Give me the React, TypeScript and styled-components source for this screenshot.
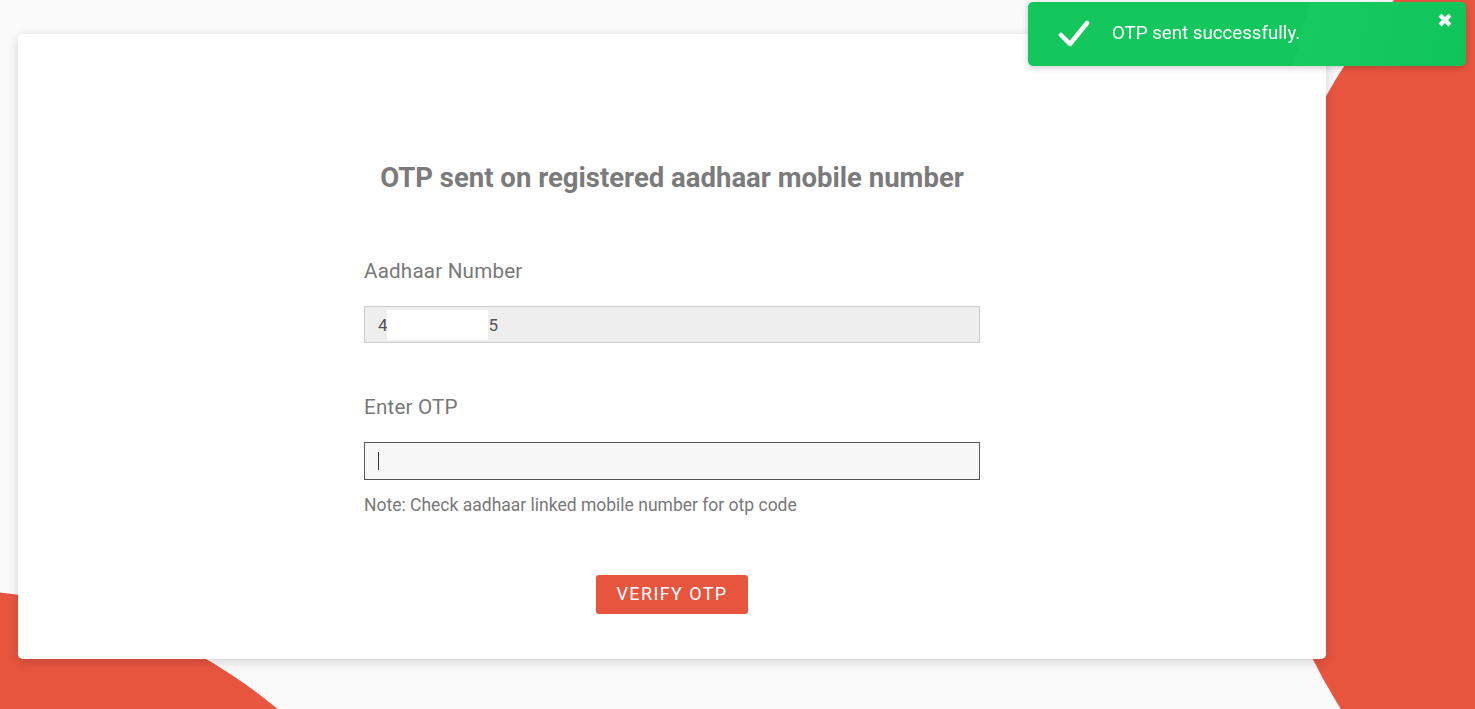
import React from 'react';
import styled, { createGlobalStyle } from 'styled-components';

const GlobalStyle = createGlobalStyle`
  html, body {
    margin: 0;
    padding: 0;
    background: #fafafa;
    font-family: Roboto, 'Liberation Sans', Arial, sans-serif;
  }
`;

const Page = styled.div`
  position: relative;
  width: 100%;
  height: 709px;
  overflow: hidden;
  background: #fafafa;
`;

const Backdrop = styled.svg`
  position: absolute;
  inset: 0;
  width: 100%;
  height: 100%;
  z-index: 0;
`;

const Card = styled.main`
  position: relative;
  z-index: 1;
  box-sizing: border-box;
  margin: 34px 0 0 18px;
  width: 1308px;
  height: 625px;
  background: #ffffff;
  border-radius: 5px;
  box-shadow: 0 3px 12px rgba(0, 0, 0, 0.16);
  display: flex;
  flex-direction: column;
  align-items: center;
  padding-top: 128px;
`;

const Title = styled.h1`
  margin: 0 0 65px;
  font-size: 27.5px;
  line-height: 32px;
  font-weight: 700;
  color: #7b7b7b;
`;

const Form = styled.form`
  width: 616px;
  display: flex;
  flex-direction: column;
`;

const Label = styled.label`
  display: block;
  font-size: 20.6px;
  line-height: 24px;
  color: #787878;
  letter-spacing: 0.2px;
  margin-bottom: 23px;
`;

const Field = styled.div<{ $focused?: boolean }>`
  position: relative;
  box-sizing: border-box;
  height: ${p => (p.$focused ? 38 : 37)}px;
  background: ${p => (p.$focused ? '#f7f7f7' : '#eeeeee')};
  border: 1px solid ${p => (p.$focused ? '#555555' : '#cccccc')};
  display: flex;
  align-items: center;
  padding-left: 13px;
  font-size: 17px;
  color: #555;
`;

const Mask = styled.span`
  display: inline-block;
  width: 101px;
  height: 30px;
  background: #ffffff;
  margin: 0 1px 0 -1px;
`;

const Caret = styled.span`
  display: inline-block;
  width: 1px;
  height: 18px;
  background: #333;
`;

const Group = styled.div<{ $gap: number }>`
  margin-bottom: ${p => p.$gap}px;
`;

const Note = styled.p`
  margin: 14px 0 0;
  font-size: 17.5px;
  line-height: 22px;
  color: #787878;
`;

const Actions = styled.div`
  display: flex;
  justify-content: center;
  margin-top: 59px;
`;

const Button = styled.button`
  height: 39px;
  width: 152px;
  border: none;
  border-radius: 3px;
  background: #e8553f;
  color: #fff;
  font-family: Roboto, 'Liberation Sans', Arial, sans-serif;
  font-size: 18px;
  font-weight: 400;
  letter-spacing: 1.4px;
  padding: 0 0 3px;
  cursor: pointer;
`;

const Toast = styled.div`
  position: fixed;
  z-index: 5;
  top: 2px;
  right: 9px;
  width: 438px;
  height: 64px;
  box-sizing: border-box;
  border-radius: 5px;
  background: linear-gradient(105deg, #13c75c 0%, #13c75c 62%, #18cb61 62%, #0fc45a 100%);
  box-shadow: 0 2px 6px rgba(0, 0, 0, 0.2);
  display: flex;
  align-items: center;
  padding-left: 30px;
  color: #fff;
`;

const ToastText = styled.span`
  font-size: 18.7px;
  margin-left: 22px;
  margin-top: -3px;
`;

const Close = styled.span`
  position: absolute;
  top: 9px;
  right: 13px;
  font-family: 'DejaVu Sans', sans-serif;
  font-weight: 700;
  font-size: 19px;
  line-height: 1;
`;

export default function App() {
  return (
    <>
      <GlobalStyle />
      <Page>
        <Backdrop viewBox="0 0 1475 709" preserveAspectRatio="none">
          <circle cx="-50" cy="1100" r="510" fill="#e8553f" />
          <ellipse cx="1760" cy="390" rx="510" ry="560" fill="#e8553f" />
        </Backdrop>
        <Card>
          <Title>OTP sent on registered aadhaar mobile number</Title>
          <Form onSubmit={e => e.preventDefault()}>
            <Group $gap={52}>
              <Label>Aadhaar Number</Label>
              <Field>
                4<Mask />5
              </Field>
            </Group>
            <Group $gap={0}>
              <Label>Enter OTP</Label>
              <Field $focused>
                <Caret />
              </Field>
              <Note>Note: Check aadhaar linked mobile number for otp code</Note>
            </Group>
            <Actions>
              <Button type="submit">VERIFY OTP</Button>
            </Actions>
          </Form>
        </Card>
        <Toast>
          <svg width="32" height="28" viewBox="0 0 32 28">
            <path d="M3 15 L12 24 L29 3" fill="none" stroke="#fff" strokeWidth="4.5" strokeLinecap="round" strokeLinejoin="round" />
          </svg>
          <ToastText>OTP sent successfully.</ToastText>
          <Close>✖</Close>
        </Toast>
      </Page>
    </>
  );
}
